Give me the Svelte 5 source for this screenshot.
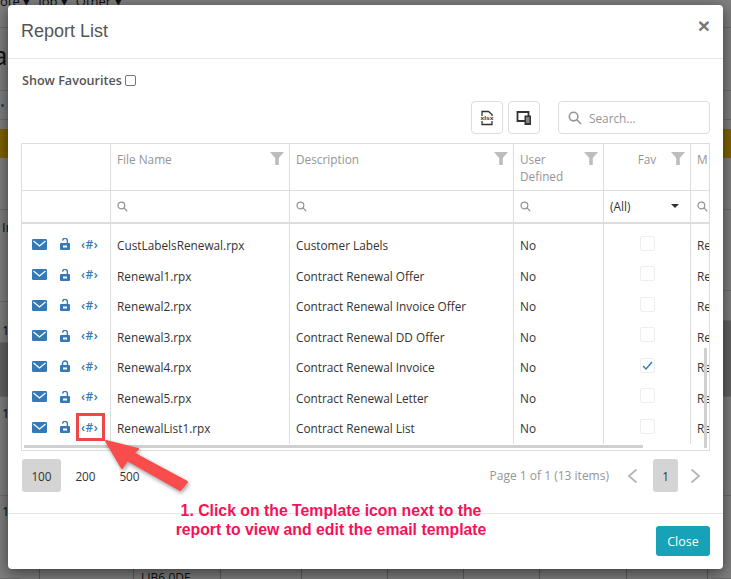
<script>
  // Report rows shown in the grid
  const reports = [
    { file: 'CustLabelsRenewal.rpx', desc: 'Customer Labels', locked: false, fav: false },
    { file: 'Renewal1.rpx', desc: 'Contract Renewal Offer', locked: false, fav: false },
    { file: 'Renewal2.rpx', desc: 'Contract Renewal Invoice Offer', locked: false, fav: false },
    { file: 'Renewal3.rpx', desc: 'Contract Renewal DD Offer', locked: false, fav: false },
    { file: 'Renewal4.rpx', desc: 'Contract Renewal Invoice', locked: true, fav: true },
    { file: 'Renewal5.rpx', desc: 'Contract Renewal Letter', locked: false, fav: false },
    { file: 'RenewalList1.rpx', desc: 'Contract Renewal List', locked: false, fav: false }
  ];

  const columns = [
    { label: '' },
    { label: 'File Name' },
    { label: 'Description' },
    { label: 'User Defined' },
    { label: 'Fav', center: true }
  ];

  // Rows of the page behind the dialog, as they show either side of it
  const leftRows = [
    { h: 52 },
    { h: 92, text: 'In', pad: 8 },
    { h: 41, text: '10', pad: 19 },
    { h: 54, dark: true },
    { h: 99, text: '10', pad: 7 },
    { h: 83, text: '10', pad: 6 }
  ];
  const rightRows = [{ h: 52 }, { h: 81 }, { h: 30 }, { h: 76, dark: true }, { h: 99 }, { h: 83 }];

  const bottomLines = [40, 94, 87, 81, 86, 76, 76, 87, 81];
</script>

{#snippet funnel()}
  <svg class="funnel" viewBox="0 0 14 13" width="14" height="13"><path d="M0 0h14L8.8 6v7H5.2V6z" /></svg>
{/snippet}

{#snippet lens(size)}
  <svg class="lens" viewBox="0 0 14 14" width={size} height={size}>
    <circle cx="5.6" cy="5.6" r="4.3" />
    <path d="M8.8 8.8 13 13" />
  </svg>
{/snippet}

{#snippet side(rows)}
  <div class="side">
    {#each rows as r}
      <div class="b-row" class:dark={r.dark} style="height:{r.h}px;padding-top:{r.pad || 0}px">{r.text || ''}</div>
    {/each}
  </div>
{/snippet}

<div class="app">
  <!-- page behind the dialog -->
  <div class="page">
    <div class="nav">
      <span>ote ▾</span><span>Job ▾</span><span>Other ▾</span>
    </div>
    <div class="heading">Tra</div>
    <div class="crumbs"><span class="dot">•</span> I</div>
    <div class="yellow"></div>
    <div class="table-bg">
      {@render side(leftRows)}
      {@render side(rightRows)}
    </div>
    <div class="bottom">
      {#each bottomLines as w}
        <div class="bottom-cell" style="width:{w}px"></div>
      {/each}
    </div>
    <div class="bottom-text">LIB6.0DF</div>
  </div>

  <div class="overlay">
    <div class="modal">
      <div class="modal-header">
        <h4>Report List</h4>
        <span class="close-x">×</span>
      </div>

      <div class="modal-body">
        <label class="fav-toggle">Show Favourites <input type="checkbox" /></label>

        <div class="toolbar">
          <button class="tool" aria-label="Export to Excel">
            <svg viewBox="0 0 16 16" width="16" height="16">
              <path d="M3 6V1.5h6.5l3.5 3V6M3 11v3.5h10V11" fill="none" stroke="#333" stroke-width="1.3" />
              <text x="1.5" y="10.4" textLength="13" lengthAdjust="spacingAndGlyphs" font-size="5.6" font-weight="700" font-family="Liberation Sans, sans-serif" fill="#333">xlsx</text>
            </svg>
          </button>
          <button class="tool" aria-label="Column chooser">
            <svg viewBox="0 0 16 16" width="16" height="16">
              <path d="M1.5 2h11v9h-11z" fill="none" stroke="#333" stroke-width="1.8" />
              <path d="M8.5 5.5H15V15H8.5z" fill="#333" />
              <path d="M10 8h3.5M10 10h3.5M10 12h3.5" stroke="#fff" stroke-width=".8" />
            </svg>
          </button>
          <div class="search">
            {@render lens(14)}
            <span>Search...</span>
          </div>
        </div>

        <div class="grid">
          <div class="row head">
            {#each columns as col}
              <div class="cell" class:center={col.center}>
                <span class="head-label">{col.label}</span>
                {#if col.label}{@render funnel()}{/if}
              </div>
            {/each}
            <div class="cell last"><span class="head-label">M</span></div>
          </div>

          <div class="row filters">
            <div class="cell"></div>
            <div class="cell">{@render lens(11)}</div>
            <div class="cell">{@render lens(11)}</div>
            <div class="cell">{@render lens(11)}</div>
            <div class="cell all"><span>(All)</span><i class="caret"></i></div>
            <div class="cell last">{@render lens(11)}</div>
          </div>

          <div class="rows">
            {#each reports as r}
              <div class="row item">
                <div class="cell actions">
                  <svg viewBox="0 0 15 11" width="15" height="11">
                    <rect width="15" height="11" rx="1.3" fill="#337ab7" />
                    <path d="M1.5 2 7.5 7l6-5" fill="none" stroke="#fff" stroke-width="1.2" />
                  </svg>
                  <svg class="lock" viewBox="0 0 10 12" width="10" height="12">
                    {#if r.locked}
                      <path d="M2.5 6V3.5a2.5 2.5 0 0 1 5 0V6" fill="none" stroke="#337ab7" stroke-width="1.4" />
                    {:else}
                      <path d="M2.6 2.6a2.4 2.4 0 0 1 4.8.4V6" fill="none" stroke="#337ab7" stroke-width="1.4" />
                    {/if}
                    <rect y="5" width="10" height="7" rx="1" fill="#337ab7" />
                    <rect x="3" y="7.5" width="4" height="2" fill="#fff" />
                  </svg>
                  <span class="tmpl">‹#›</span>
                </div>
                <div class="cell">{r.file}</div>
                <div class="cell">{r.desc}</div>
                <div class="cell">No</div>
                <div class="cell center">
                  <span class="check">
                    {#if r.fav}
                      <svg viewBox="0 0 11 9" width="11" height="9"><path d="M1 5l3 3 6-7" fill="none" stroke="#337ab7" stroke-width="1.4" /></svg>
                    {/if}
                  </span>
                </div>
                <div class="cell last">Report</div>
              </div>
            {/each}
          </div>

          <div class="hscroll"></div>
          <div class="vscroll"></div>
        </div>

        <div class="pager">
          <div class="sizes">
            <span class="page-btn active">100</span>
            <span class="page-btn">200</span>
            <span class="page-btn">500</span>
          </div>
          <div class="pages">
            <span class="info">Page 1 of 1 (13 items)</span>
            <svg class="chev" viewBox="0 0 11 16" width="11" height="16"><path d="M9.5 1.5 2 8l7.5 6.5" /></svg>
            <span class="page-num">1</span>
            <svg class="chev" viewBox="0 0 11 16" width="11" height="16"><path d="M1.5 1.5 9 8l-7.5 6.5" /></svg>
          </div>
        </div>
      </div>

      <div class="modal-footer">
        <button class="close-btn">Close</button>
      </div>
    </div>
  </div>

  <!-- screenshot annotation drawn on top -->
  <div class="mark"></div>
  <svg class="arrow" viewBox="0 0 731 579" width="731" height="579">
    <path d="M106 441 138 449 133 453 187 482 180 490 127 460 122 468z" />
  </svg>
  <div class="note">
    1. Click on the Template icon next to the<br />report to view and edit the email template
  </div>
</div>

<style>
  :global(body) {
    margin: 0;
  }

  .app {
    position: relative;
    width: 731px;
    height: 579px;
    overflow: hidden;
    background: #fff;
    font-family: 'Open Sans', sans-serif;
    font-size: 11.8px;
    color: #333;
  }

  /* background page */
  .page {
    height: 579px;
    overflow: hidden;
    color: #222;
    font-size: 13px;
  }

  .nav {
    display: flex;
    gap: 8px;
    height: 27px;
    border-bottom: 1px solid #ddd;
    line-height: 18px;
  }

  .nav span {
    margin-top: -8px;
  }

  .heading {
    height: 62px;
    border-bottom: 1px solid #ddd;
    margin-left: -32px;
    font-size: 26px;
    line-height: 54px;
  }

  .crumbs {
    height: 28px;
    border-bottom: 1px solid #ddd;
    line-height: 28px;
  }

  .dot {
    color: #337ab7;
  }

  .yellow {
    height: 29px;
    margin-top: 9px;
    background: #ffc800;
  }

  .table-bg {
    display: flex;
    justify-content: space-between;
    height: 351px;
  }

  .side {
    width: 20px;
  }

  .b-row {
    box-sizing: border-box;
    padding-left: 2px;
    border-bottom: 1px solid #ddd;
  }

  .dark {
    background: #c4c4c4;
  }

  .bottom {
    display: flex;
    height: 70px;
  }

  .bottom-cell {
    box-sizing: border-box;
    border-right: 1px solid #bbb;
  }

  .bottom-text {
    margin: -8px 0 0 141px;
    font-size: 12px;
    line-height: 14px;
  }

  /* dialog */
  .overlay {
    position: absolute;
    inset: 0;
    padding: 5px 8px;
    background: rgba(0, 0, 0, 0.5);
  }

  .modal {
    display: flex;
    flex-direction: column;
    width: 715px;
    height: 564px;
    background: #fff;
    border-radius: 4px;
    box-shadow: 0 4px 15px rgba(0, 0, 0, 0.55);
  }

  .modal-header {
    display: flex;
    justify-content: space-between;
    box-sizing: border-box;
    height: 54px;
    padding: 13px 13px 0 13px;
    border-bottom: 1px solid #e5e5e5;
  }

  h4 {
    margin: 0;
    font-family: 'Liberation Sans', sans-serif;
    font-size: 18px;
    font-weight: 400;
    line-height: 26px;
    color: #555;
  }

  .close-x {
    font-family: 'Liberation Sans', sans-serif;
    font-size: 21px;
    font-weight: 700;
    line-height: 16px;
    color: #777;
  }

  .modal-body {
    flex: 1;
    padding: 13px 13px 0;
  }

  .fav-toggle {
    display: flex;
    align-items: center;
    gap: 3px;
    height: 16px;
    margin-left: 1px;
    font-size: 12.6px;
    font-weight: 600;
    color: #555;
  }

  .fav-toggle input {
    width: 11px;
    height: 11px;
    margin: 0;
    appearance: none;
    border: 1px solid #767676;
    border-radius: 2px;
    background: #fff;
  }

  .toolbar {
    display: flex;
    align-items: center;
    justify-content: flex-end;
    height: 33px;
    margin-top: 13px;
  }

  .tool {
    display: flex;
    align-items: center;
    justify-content: center;
    box-sizing: border-box;
    width: 32px;
    height: 33px;
    margin-left: 5px;
    padding: 0;
    background: #fff;
    border: 1px solid #ddd;
    border-radius: 4px;
  }

  .search {
    display: flex;
    align-items: center;
    gap: 7px;
    box-sizing: border-box;
    width: 152px;
    height: 33px;
    margin-left: 18px;
    padding: 0 9px;
    border: 1px solid #ddd;
    border-radius: 4px;
    color: #959595;
  }

  .lens {
    display: block;
    flex: none;
  }

  .lens circle,
  .lens path {
    fill: none;
    stroke: #959595;
    stroke-width: 1.6;
  }

  .grid {
    position: relative;
    box-sizing: border-box;
    width: 689px;
    height: 308px;
    margin-top: 9px;
    border: 1px solid #ddd;
    overflow: hidden;
  }

  .row {
    display: grid;
    grid-template-columns: 89px 179px 224px 90px 87px 1fr;
  }

  .cell {
    box-sizing: border-box;
    padding: 0 6px;
    border-right: 1px solid #ddd;
    overflow: hidden;
    white-space: nowrap;
  }

  .cell.last {
    border-right: 0;
  }

  .head {
    height: 46px;
    border-bottom: 1px solid #ddd;
  }

  .head .cell {
    position: relative;
    padding-top: 7px;
    line-height: 17px;
    white-space: normal;
    color: #959595;
  }

  .head .center {
    text-align: center;
  }

  .head-label {
    display: block;
    max-width: 50px;
    min-width: 0;
  }

  .head .cell:nth-child(2) .head-label,
  .head .cell:nth-child(3) .head-label {
    max-width: none;
  }

  .head .center .head-label {
    max-width: none;
  }

  .funnel {
    position: absolute;
    top: 8px;
    right: 5px;
    fill: #bdbdbd;
  }

  .filters {
    height: 31px;
    border-bottom: 2px solid #ddd;
  }

  .filters .cell {
    display: flex;
    align-items: center;
  }

  .all {
    justify-content: space-between;
    padding-right: 11px;
    padding-bottom: 2px;
  }

  .caret {
    width: 0;
    height: 0;
    border: 4px solid transparent;
    border-top-color: #333;
    border-bottom: 0;
  }

  .rows {
    height: 220px;
    padding-top: 6px;
    box-sizing: border-box;
    overflow: hidden;
    background:
      linear-gradient(#ddd, #ddd) 88px 0 / 1px 100% no-repeat,
      linear-gradient(#ddd, #ddd) 267px 0 / 1px 100% no-repeat,
      linear-gradient(#ddd, #ddd) 491px 0 / 1px 100% no-repeat,
      linear-gradient(#ddd, #ddd) 581px 0 / 1px 100% no-repeat,
      linear-gradient(#ddd, #ddd) 668px 0 / 1px 100% no-repeat;
  }

  .item {
    height: 30.5px;
  }

  .item .cell {
    display: flex;
    align-items: center;
  }

  .item .center {
    justify-content: center;
  }

  .actions {
    padding: 0 0 2px 10px;
  }

  .lock {
    margin-left: 13px;
  }

  .tmpl {
    margin-left: 11px;
    font-size: 12px;
    font-weight: 600;
    letter-spacing: 0.5px;
    color: #337ab7;
  }

  .check {
    display: flex;
    align-items: center;
    justify-content: center;
    box-sizing: border-box;
    width: 15px;
    height: 15px;
    margin-bottom: 4px;
    border: 1px solid #eee;
    border-radius: 2px;
  }

  .hscroll {
    position: absolute;
    left: 2px;
    bottom: 2px;
    width: 619px;
    height: 3px;
    background: #d0d0d0;
  }

  .vscroll {
    position: absolute;
    right: 2px;
    bottom: 2px;
    width: 3px;
    height: 100px;
    background: #d0d0d0;
  }

  .pager {
    display: flex;
    justify-content: space-between;
    margin-top: 8px;
    padding-right: 9px;
  }

  .sizes,
  .pages {
    display: flex;
    align-items: center;
    height: 33px;
  }

  .sizes {
    gap: 5px;
    margin-left: 1px;
  }

  .page-btn {
    width: 39px;
    height: 33px;
    line-height: 35px;
    text-align: center;
    border-radius: 3px;
  }

  .active,
  .page-num {
    background: #d4d4d4;
  }

  .info {
    margin-right: 18px;
    font-size: 12px;
    color: #959595;
  }

  .chev {
    fill: none;
    stroke: #b5b5b5;
    stroke-width: 1.8;
  }

  .page-num {
    width: 25px;
    height: 33px;
    margin: 0 12px 0 15px;
    line-height: 35px;
    text-align: center;
    border-radius: 3px;
  }

  .modal-footer {
    display: flex;
    justify-content: flex-end;
    height: 56px;
    padding: 12px 13px 0;
    box-sizing: border-box;
    border-top: 1px solid #e5e5e5;
  }

  .close-btn {
    width: 54px;
    height: 30px;
    padding: 0;
    background: #17a2b8;
    border: 0;
    border-radius: 3px;
    color: #fff;
    font-family: 'Open Sans', sans-serif;
    font-size: 12.5px;
  }

  /* annotation */
  .mark {
    position: absolute;
    left: 76px;
    top: 413px;
    box-sizing: border-box;
    width: 29px;
    height: 28px;
    border: 3px solid #f04848;
  }

  .arrow {
    position: absolute;
    left: 0;
    top: 0;
    pointer-events: none;
    filter: drop-shadow(1px 2px 2px rgba(0, 0, 0, 0.4));
  }

  .arrow path {
    fill: #f94c4c;
    stroke: #f94c4c;
    stroke-width: 2;
    stroke-linejoin: round;
  }

  .note {
    position: absolute;
    left: 131px;
    top: 501px;
    width: 400px;
    text-align: center;
    font-family: 'Liberation Sans', sans-serif;
    font-size: 15.8px;
    font-weight: 700;
    line-height: 19px;
    color: #f5125a;
  }
</style>
